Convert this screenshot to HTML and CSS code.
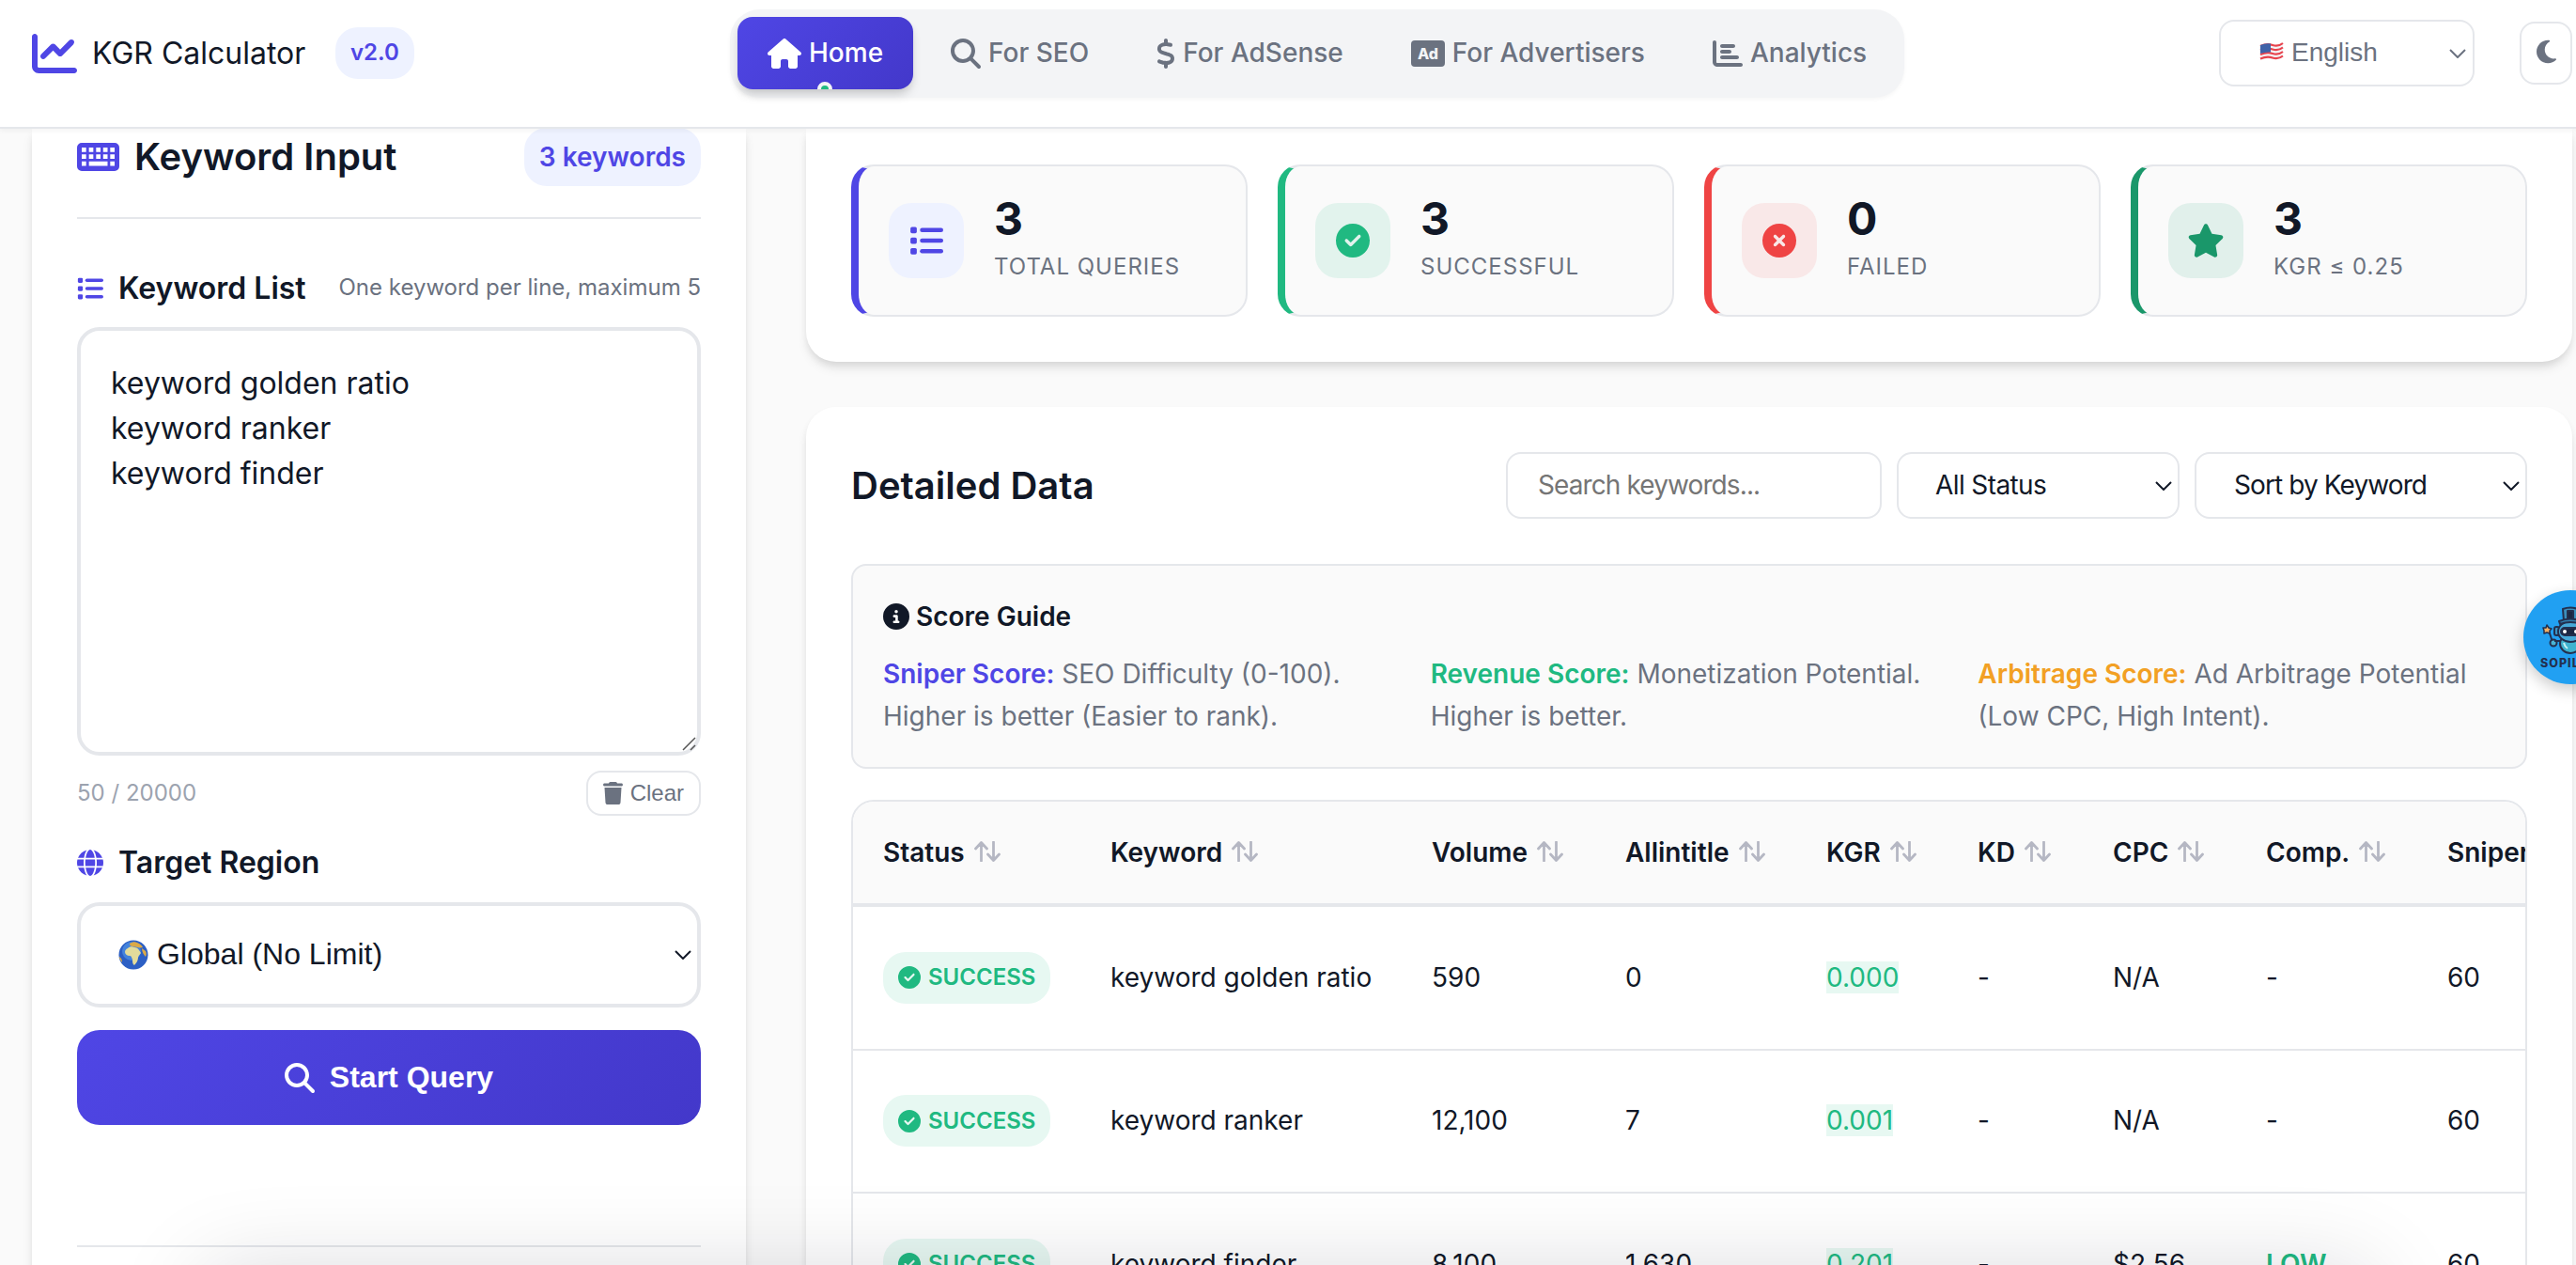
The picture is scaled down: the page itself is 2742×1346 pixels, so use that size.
FILE: index.html
```html
<!DOCTYPE html>
<html lang="en">
<head>
    <meta charset="UTF-8">
    <title>KGR Calculator</title>
    <link rel="stylesheet" href="styles.css">
</head>
<body>
    <!-- Shared icons -->
    <svg class="sprite">
        <symbol id="i-search" viewBox="0 0 512 512"><path d="M416 208c0 45.9-14.9 88.3-40 122.7L502.6 457.4c12.5 12.5 12.5 32.8 0 45.3s-32.8 12.5-45.3 0L330.7 376c-34.4 25.2-76.8 40-122.7 40C93.1 416 0 322.9 0 208S93.1 0 208 0S416 93.1 416 208zM208 352a144 144 0 1 0 0-288 144 144 0 1 0 0 288z"/></symbol>
        <symbol id="i-list" viewBox="0 0 512 512">
            <rect x="16" y="48" width="96" height="96" rx="24"/><rect x="160" y="64" width="352" height="64" rx="32"/>
            <rect x="16" y="208" width="96" height="96" rx="24"/><rect x="160" y="224" width="352" height="64" rx="32"/>
            <rect x="16" y="368" width="96" height="96" rx="24"/><rect x="160" y="384" width="352" height="64" rx="32"/>
        </symbol>
        <symbol id="i-check" viewBox="0 0 512 512"><path d="M256 512A256 256 0 1 0 256 0a256 256 0 1 0 0 512zM369 209L241 337c-9.4 9.4-24.6 9.4-33.9 0l-64-64c-9.4-9.4-9.4-24.6 0-33.9s24.6-9.4 33.9 0l47 47L335 175c9.4-9.4 24.6-9.4 33.9 0s9.4 24.6 0 33.9z"/></symbol>
        <symbol id="i-chevron" viewBox="0 0 18 10"><path d="M1 1l8 8 8-8" fill="none" stroke="currentColor" stroke-width="2"/></symbol>
        <symbol id="i-sort" viewBox="0 0 28 22"><path d="M7.5 21V2M1.5 8l6-6.5 6 6.5M20.5 1v19M14.5 14l6 6.5 6-6.5" fill="none" stroke="currentColor" stroke-width="2.8" stroke-linecap="round" stroke-linejoin="round"/></symbol>
    </svg>

    <header class="header">
        <div class="logo">
            <svg class="logo-icon" viewBox="0 0 512 512"><path d="M64 64c0-17.7-14.3-32-32-32S0 46.3 0 64V400c0 44.2 35.8 80 80 80H480c17.7 0 32-14.3 32-32s-14.3-32-32-32H80c-8.8 0-16-7.2-16-16V64zm406.6 86.6c12.5-12.5 12.5-32.8 0-45.3s-32.8-12.5-45.3 0L320 210.7l-57.4-57.4c-12.5-12.5-32.8-12.5-45.3 0l-112 112c-12.5 12.5-12.5 32.8 0 45.3s32.8 12.5 45.3 0L240 221.3l57.4 57.4c12.5 12.5 32.8 12.5 45.3 0l128-128z"/></svg>
            <span class="logo-text">KGR Calculator</span>
            <span class="version">v2.0</span>
        </div>
        <nav class="nav">
            <a class="nav-item active">
                <svg class="wide" viewBox="0 0 576 512"><path d="M575.8 255.5c0 18-15 32.1-32 32.1h-32l.7 160.2c0 2.7-.2 5.4-.5 8.1V472c0 22.1-17.9 40-40 40H456c-1.1 0-2.2 0-3.3-.1c-1.4 .1-2.8 .1-4.2 .1H416 392c-22.1 0-40-17.9-40-40V448 384c0-17.7-14.3-32-32-32H256c-17.7 0-32 14.3-32 32v64 24c0 22.1-17.9 40-40 40H160 128.1c-1.5 0-3-.1-4.5-.2c-1.2 .1-2.4 .2-3.6 .2H104c-22.1 0-40-17.9-40-40V360c0-.9 0-1.9 .1-2.8V287.6H32c-18 0-32-14-32-32.1c0-9 3-17 10-24L266.4 8c7-7 15-8 22-8s15 2 21 7L564.8 231.5c8 7 12 15 11 24z"/></svg>
                Home
            </a>
            <a class="nav-item"><svg><use href="#i-search"/></svg>For SEO</a>
            <a class="nav-item">
                <svg class="thin" viewBox="0 0 320 512"><path d="M160 0c17.7 0 32 14.3 32 32V67.7c1.6 .2 3.1 .4 4.7 .7c.4 .1 .7 .1 1.1 .2l48 8.8c17.4 3.2 28.9 19.9 25.7 37.2s-19.9 28.9-37.2 25.7l-47.5-8.7c-31.3-4.6-58.9-1.5-78.3 6.2s-27.2 18.3-29 28.1c-2 10.7-.5 16.7 1.2 20.4c1.8 3.9 5.5 8.3 12.8 13.2c16.3 10.7 41.3 17.7 73.7 26.3l2.9 .8c28.6 7.6 63.6 16.8 89.6 33.8c14.2 9.3 27.6 21.9 35.9 39.5c8.5 17.9 10.3 37.9 6.4 59.2c-6.9 38-33.1 63.4-65.6 76.7c-13.7 5.6-28.6 9.2-44.4 11V480c0 17.7-14.3 32-32 32s-32-14.3-32-32V445.1c-.4-.1-.9-.1-1.3-.2l-.2 0c-24.4-3.8-64.5-14.3-91.5-26.3c-16.1-7.2-23.4-26.1-16.2-42.2s26.1-23.4 42.2-16.2c20.9 9.3 55.3 18.5 75.2 21.6c31.9 4.7 58.2 2 76-5.3c16.9-6.9 24.6-16.9 26.8-28.9c1.9-10.6 .4-16.7-1.3-20.4c-1.9-4-5.6-8.4-13-13.3c-16.4-10.7-41.5-17.7-74-26.3l-2.8-.7C119.4 279.3 84.4 270 58.4 253c-14.2-9.3-27.5-22-35.8-39.6c-8.4-17.9-10.1-37.9-6.1-59.2C23.7 116 52.3 91.2 84.8 78.3c13.3-5.3 27.9-8.9 43.2-11V32c0-17.7 14.3-32 32-32z"/></svg>
                For AdSense
            </a>
            <a class="nav-item">
                <svg class="wide" viewBox="0 0 576 512"><rect y="32" width="576" height="448" rx="64"/><text class="ad-text" x="288" y="346" text-anchor="middle">Ad</text></svg>
                For Advertisers
            </a>
            <a class="nav-item">
                <svg viewBox="0 0 512 512"><path d="M32 32c17.7 0 32 14.3 32 32V400c0 8.8 7.2 16 16 16H480c17.7 0 32 14.3 32 32s-14.3 32-32 32H80c-44.2 0-80-35.8-80-80V64C0 46.3 14.3 32 32 32zm96 96c0-17.7 14.3-32 32-32l192 0c17.7 0 32 14.3 32 32s-14.3 32-32 32l-192 0c-17.7 0-32-14.3-32-32zm32 64H288c17.7 0 32 14.3 32 32s-14.3 32-32 32H160c-17.7 0-32-14.3-32-32s14.3-32 32-32zm0 96H416c17.7 0 32 14.3 32 32s-14.3 32-32 32H160c-17.7 0-32-14.3-32-32s14.3-32 32-32z"/></svg>
                Analytics
            </a>
        </nav>
        <div class="header-right">
            <div class="lang">
                <svg class="flag" viewBox="0 0 26 20">
                    <path d="M1 3q7-3 13-1t11-2v16q-5 3-11 2T1 19z" fill="#f4f4f6"/>
                    <path d="M1 4q7-3 13-1t11-2M1 8.5q7-3 13-1t11-2M1 13q7-3 13-1t11-2M1 17.5q7-3 13-1t11-2" fill="none" stroke="#e8424c" stroke-width="2.2"/>
                    <path d="M1 3q6-2.5 11-1.5v9Q7 10 1 12z" fill="#3f62a8"/>
                </svg>
                <span>English</span>
                <svg class="chevron"><use href="#i-chevron"/></svg>
            </div>
            <div class="theme">
                <svg viewBox="0 0 384 512"><path d="M223.5 32C100 32 0 132.3 0 256S100 480 223.5 480c60.6 0 115.5-24.2 155.8-63.4c5-4.9 6.3-12.5 3.1-18.7s-10.1-9.7-17-8.5c-9.8 1.7-19.8 2.6-30.1 2.6c-96.9 0-175.5-78.8-175.5-176c0-65.8 36-123.1 89.3-153.3c6.1-3.5 9.2-10.5 7.7-17.3s-7.3-11.9-14.3-12.5c-6.3-.5-12.6-.8-19-.8z"/></svg>
            </div>
        </div>
    </header>

    <main class="layout">
        <!-- Left side: keyword form -->
        <section class="panel input-panel">
            <div class="panel-head">
                <svg class="keyboard" viewBox="0 0 576 512"><path fill-rule="evenodd" d="M64 64h448a64 64 0 0 1 64 64v256a64 64 0 0 1-64 64H64a64 64 0 0 1-64-64V128a64 64 0 0 1 64-64zM64 128v60h60v-60zM162 128v60h60v-60zM260 128v60h60v-60zM356 128v60h60v-60zM452 128v60h60v-60zM64 222v60h60v-60zM162 222v60h60v-60zM260 222v60h60v-60zM356 222v60h60v-60zM452 222v60h60v-60zM64 318v60h60v-60zM162 318v60h254v-60zM452 318v60h60v-60z"/></svg>
                <h2>Keyword Input</h2>
                <span class="count">3 keywords</span>
            </div>
            <div class="label-row">
                <svg><use href="#i-list"/></svg>
                <label>Keyword List</label>
                <span class="hint">One keyword per line, maximum 5</span>
            </div>
            <div class="textarea">
                keyword golden ratio<br>keyword ranker<br>keyword finder
                <svg class="grip" viewBox="0 0 15 15"><path d="M1 14L14 1M9 14l5-5" stroke="#555" stroke-width="1.5"/></svg>
            </div>
            <div class="textarea-foot">
                <span>50 / 20000</span>
                <button class="clear">
                    <svg viewBox="0 0 448 512"><path d="M135.2 17.7L128 32H32C14.3 32 0 46.3 0 64S14.3 96 32 96H416c17.7 0 32-14.3 32-32s-14.3-32-32-32H320l-7.2-14.3C307.4 6.8 296.3 0 284.2 0H163.8c-12.1 0-23.2 6.8-28.6 17.7zM416 128H32L53.2 467c1.6 25.3 22.6 45 47.9 45H346.9c25.3 0 46.3-19.7 47.9-45L416 128z"/></svg>
                    Clear
                </button>
            </div>
            <div class="label-row region">
                <svg viewBox="0 0 512 512"><path d="M352 256c0 22.2-1.2 43.6-3.3 64H163.3c-2.2-20.4-3.3-41.8-3.3-64s1.2-43.6 3.3-64H348.7c2.2 20.4 3.3 41.8 3.3 64zm28.8-64H503.9c5.3 20.5 8.1 41.9 8.1 64s-2.8 43.5-8.1 64H380.8c2.1-20.6 3.2-42 3.2-64s-1.1-43.4-3.2-64zm112.6-32H376.7c-10-63.9-29.8-117.4-55.3-151.6c78.3 20.7 142 77.5 171.9 151.6zm-149.1 0H167.7c6.1-36.4 15.5-68.6 27-94.7c10.5-23.6 22.2-40.7 33.5-51.5C239.4 3.2 248.7 0 256 0s16.6 3.2 27.8 13.8c11.3 10.8 23 27.9 33.5 51.5c11.6 26 20.9 58.2 27 94.7zm-209 0H18.6C48.6 85.9 112.2 29.1 190.6 8.4C165.1 42.6 145.3 96.1 135.3 160zM8.1 192H131.2c-2.1 20.6-3.2 42-3.2 64s1.1 43.4 3.2 64H8.1C2.8 299.5 0 278.1 0 256s2.8-43.5 8.1-64zM194.7 446.6c-11.6-26-20.9-58.2-27-94.6H344.3c-6.1 36.4-15.5 68.6-27 94.6c-10.5 23.6-22.2 40.7-33.5 51.5C272.6 508.8 263.3 512 256 512s-16.6-3.2-27.8-13.8c-11.3-10.8-23-27.9-33.5-51.5zM135.3 352c10 63.9 29.8 117.4 55.3 151.6C112.2 482.9 48.6 426.1 18.6 352H135.3zm358.1 0c-30 74.1-93.6 130.9-171.9 151.6c25.5-34.2 45.2-87.7 55.3-151.6H493.4z"/></svg>
                <label>Target Region</label>
            </div>
            <div class="region-select">
                <svg class="earth" viewBox="0 0 32 32">
                    <circle cx="16" cy="16" r="15.5" fill="#2c5fc4"/>
                    <circle cx="14" cy="12" r="10" fill="#4e93e6" opacity=".7"/>
                    <path d="M10 9c2-2 5-2 7-1 2 0 4 1 5 3l2 3c-1 2-3 3-3 5 0 3-2 6-4 8-2-1-2-4-2-6-1-2-1-4-3-4-3 0-5-2-5-4s1-3 3-4z" fill="#e3dc9b"/>
                    <path d="M12 4c3-2 6-2 8-1 3 1 5 3 6 5-2 1-4 0-6 0-2-1-3 0-5-1-2 0-3-1-3-3zM25 9l4 3c1 2 1 4 0 6-2-2-4-5-4-9zM1 18c2 1 3 3 3 6-2-2-3-4-3-6z" fill="#dba947"/>
                </svg>
                <span>Global (No Limit)</span>
                <svg class="chevron"><use href="#i-chevron"/></svg>
            </div>
            <button class="start"><svg><use href="#i-search"/></svg>Start Query</button>
            <div class="form-line"></div>
        </section>

        <div class="results">
            <section class="panel stats">
                <div class="stat total">
                    <div class="stat-icon"><svg><use href="#i-list"/></svg></div>
                    <div><div class="num">3</div><div class="stat-label">Total Queries</div></div>
                </div>
                <div class="stat ok">
                    <div class="stat-icon"><svg><use href="#i-check"/></svg></div>
                    <div><div class="num">3</div><div class="stat-label">Successful</div></div>
                </div>
                <div class="stat fail">
                    <div class="stat-icon"><svg viewBox="0 0 512 512"><path d="M256 512A256 256 0 1 0 256 0a256 256 0 1 0 0 512zM175 175c9.4-9.4 24.6-9.4 33.9 0l47 47 47-47c9.4-9.4 24.6-9.4 33.9 0s9.4 24.6 0 33.9l-47 47 47 47c9.4 9.4 9.4 24.6 0 33.9s-24.6 9.4-33.9 0l-47-47-47 47c-9.4 9.4-24.6 9.4-33.9 0s-9.4-24.6 0-33.9l47-47-47-47c-9.4-9.4-9.4-24.6 0-33.9z"/></svg></div>
                    <div><div class="num">0</div><div class="stat-label">Failed</div></div>
                </div>
                <div class="stat kgr">
                    <div class="stat-icon"><svg class="star" viewBox="0 0 576 512"><path d="M316.9 18C311.6 7 300.4 0 288.1 0s-23.4 7-28.8 18L195 150.3 51.4 171.5c-12 1.8-22 10.2-25.7 21.7s-.7 24.2 7.9 32.7L137.8 329 113.2 474.7c-2 12 3 24.2 12.9 31.3s23 8 33.8 2.3l128.3-68.5 128.3 68.5c10.8 5.7 23.9 4.9 33.8-2.3s14.9-19.3 12.9-31.3L438.5 329 542.7 225.9c8.6-8.5 11.7-21.2 7.9-32.7s-13.7-19.9-25.7-21.7L381.2 150.3 316.9 18z"/></svg></div>
                    <div><div class="num">3</div><div class="stat-label">KGR ≤ 0.25</div></div>
                </div>
            </section>

            <section class="panel data">
                <div class="data-head">
                    <h2>Detailed Data</h2>
                    <div class="field search">Search keywords...</div>
                    <div class="field status">All Status<svg class="chevron"><use href="#i-chevron"/></svg></div>
                    <div class="field sort">Sort by Keyword<svg class="chevron"><use href="#i-chevron"/></svg></div>
                </div>
                <div class="guide">
                    <h4>
                        <svg viewBox="0 0 512 512"><path d="M256 512A256 256 0 1 0 256 0a256 256 0 1 0 0 512zM216 336h24V272H216c-13.3 0-24-10.7-24-24s10.7-24 24-24h48c13.3 0 24 10.7 24 24v88h8c13.3 0 24 10.7 24 24s-10.7 24-24 24H216c-13.3 0-24-10.7-24-24s10.7-24 24-24zm40-208a32 32 0 1 1 0 64 32 32 0 1 1 0-64z"/></svg>
                        Score Guide
                    </h4>
                    <div class="guide-grid">
                        <div><strong class="c-sniper">Sniper Score:</strong> SEO Difficulty (0-100). Higher is better (Easier to rank).</div>
                        <div><strong class="c-revenue">Revenue Score:</strong> Monetization Potential. Higher is better.</div>
                        <div><strong class="c-arbitrage">Arbitrage Score:</strong> Ad Arbitrage Potential (Low CPC, High Intent).</div>
                    </div>
                </div>
                <div class="table-wrap">
                    <table>
                        <colgroup>
                            <col class="w-status"><col class="w-keyword"><col class="w-volume"><col class="w-allin"><col class="w-kgr"><col class="w-kd"><col class="w-cpc"><col class="w-comp"><col class="w-sniper">
                        </colgroup>
                        <thead>
                            <tr>
                                <th>Status<svg><use href="#i-sort"/></svg></th>
                                <th>Keyword<svg><use href="#i-sort"/></svg></th>
                                <th>Volume<svg><use href="#i-sort"/></svg></th>
                                <th>Allintitle<svg><use href="#i-sort"/></svg></th>
                                <th>KGR<svg><use href="#i-sort"/></svg></th>
                                <th>KD<svg><use href="#i-sort"/></svg></th>
                                <th>CPC<svg><use href="#i-sort"/></svg></th>
                                <th>Comp.<svg><use href="#i-sort"/></svg></th>
                                <th>Sniper</th>
                            </tr>
                        </thead>
                        <tbody>
                            <tr>
                                <td><span class="pill"><svg><use href="#i-check"/></svg>SUCCESS</span></td>
                                <td>keyword golden ratio</td>
                                <td>590</td>
                                <td>0</td>
                                <td><span class="good">0.000</span></td>
                                <td>-</td>
                                <td>N/A</td>
                                <td>-</td>
                                <td>60</td>
                            </tr>
                            <tr>
                                <td><span class="pill"><svg><use href="#i-check"/></svg>SUCCESS</span></td>
                                <td>keyword ranker</td>
                                <td>12,100</td>
                                <td>7</td>
                                <td><span class="good">0.001</span></td>
                                <td>-</td>
                                <td>N/A</td>
                                <td>-</td>
                                <td>60</td>
                            </tr>
                            <tr>
                                <td><span class="pill"><svg><use href="#i-check"/></svg>SUCCESS</span></td>
                                <td>keyword finder</td>
                                <td>8,100</td>
                                <td>1,630</td>
                                <td><span class="good">0.201</span></td>
                                <td>-</td>
                                <td>$2.56</td>
                                <td><span class="low">LOW</span></td>
                                <td>60</td>
                            </tr>
                        </tbody>
                    </table>
                </div>
            </section>
        </div>
    </main>

    <!-- Floating assistant button, cut by the window edge -->
    <div class="bot">
        <svg viewBox="0 0 100 100">
            <g stroke="#23304f" stroke-width="2" stroke-linejoin="round">
                <path d="M27 43l5 15" fill="none"/>
                <path d="M25 37l2 3 3 1-2 2 0 3-3-1-3 1 0-3-1-3 3 0z" fill="#f3b065" stroke-width="1.5"/>
                <circle cx="32" cy="56" r="3.5" fill="#49b4d6"/>
                <path d="M33 54h8M63 54h8" fill="none"/>
                <ellipse cx="50" cy="57" rx="11" ry="10" fill="#3fb3cf"/>
                <rect x="33" y="39" width="5" height="9" rx="2" fill="#3a93c4"/>
                <rect x="62" y="39" width="5" height="9" rx="2" fill="#3a93c4"/>
                <ellipse cx="50" cy="44" rx="13" ry="11" fill="#47a9d8"/>
                <rect x="40" y="40" width="20" height="8" rx="4" fill="#1c2742"/>
                <path d="M42 20q8-3 16 0l-1 13H43z" fill="#3c8fbd"/>
                <path d="M47 22h6v9h-6z" fill="#1c2742"/>
                <path d="M38 33q12-5 24 0l-1 3q-11-4-22 0z" fill="#327fae"/>
            </g>
            <circle cx="44" cy="44" r="2" fill="#fff"/>
            <circle cx="56" cy="44" r="2" fill="#fff"/>
            <path d="M43 56q1 4 4 6" fill="none" stroke="#c5f1f4" stroke-width="2"/>
        </svg>
        <span>SOPILOT</span>
    </div>
    <div class="bottom-shade"></div>
</body>
</html>
```

FILE: styles.css
```css
*, *::after {
    box-sizing: border-box;
}

body {
    margin: 0;
    height: 1346px;
    overflow: hidden;
    position: relative;
    background: #fafafa;
    color: #111827;
    font-family: Inter, sans-serif;
    font-size: 28px;
    line-height: 1.6;
}

h2, h4 {
    margin: 0;
}

svg {
    fill: currentColor;
    flex: none;
    width: 28px;
    height: 28px;
}

.sprite {
    display: none;
}

/* Header */
.header {
    position: relative;
    z-index: 5;
    height: 137px;
    padding: 10px 4px 0 34px;
    display: grid;
    grid-template-columns: 743px auto 1fr;
    align-items: start;
    background: #fff;
    border-bottom: 2px solid #e5e7eb;
    box-shadow: 0 2px 6px rgba(0, 0, 0, .05);
}

.logo {
    height: 93px;
    display: flex;
    align-items: center;
}

.logo-icon {
    width: 48px;
    height: 48px;
    color: #4f46e5;
}

.logo-text {
    margin: 0 32px 0 16px;
    width: 227px;
    font-size: 32px;
    white-space: nowrap;
}

.version {
    padding: 0 16px;
    height: 55px;
    line-height: 53px;
    border-radius: 24px;
    background: #eef2ff;
    color: #4f46e5;
    font-size: 24px;
    font-weight: 600;
}

.nav {
    display: flex;
    gap: 8px;
    padding: 8px;
    height: 94px;
    border-radius: 32px;
    background: #f3f4f6;
    box-shadow: 0 2px 4px rgba(0, 0, 0, .04);
}

.nav-item {
    position: relative;
    display: flex;
    align-items: center;
    gap: 8px;
    padding: 0 32px;
    height: 77px;
    border-radius: 16px;
    color: #6b7280;
    font-weight: 500;
    white-space: nowrap;
}

    .nav-item svg {
        width: 32px;
        height: 32px;
    }

    .nav-item .wide {
        width: 36px;
    }

    .nav-item .thin {
        width: 20px;
    }

    .nav-item.active {
        overflow: hidden;
        color: #fff;
        background: linear-gradient(135deg, #4f46e5, #4338ca);
        box-shadow: 0 8px 12px -2px rgba(0, 0, 0, .12), 0 4px 8px -2px rgba(0, 0, 0, .1);
    }

    /* current page dot, only its upper half is visible */
    .nav-item.active::after {
        content: "";
        position: absolute;
        left: 85px;
        top: 69px;
        width: 16px;
        height: 16px;
        border: 4px solid #f3f4f6;
        border-radius: 50%;
        background: #20b981;
    }

.ad-text {
    fill: #f3f4f6;
    font-size: 256px;
    font-weight: 800;
}

.header-right {
    height: 93px;
    display: flex;
    align-items: center;
    justify-content: flex-end;
    gap: 48px;
    color: #6b7280;
}

.lang {
    width: 272px;
    height: 71px;
    padding: 0 7px 0 41px;
    display: flex;
    align-items: center;
    border: 2px solid #e5e7eb;
    border-radius: 16px;
    font-family: "Liberation Sans", Arial, sans-serif;
    font-size: 28px;
}

.flag {
    width: 26px;
    height: 20px;
    margin-right: 8px;
    margin-top: -3px;
}

.chevron {
    width: 18px;
    height: 10px;
    margin-left: auto;
}

.theme {
    width: 56px;
    height: 67px;
    display: flex;
    align-items: center;
    justify-content: center;
    border: 2px solid #e5e7eb;
    border-radius: 16px;
}

    .theme svg {
        width: 21px;
        height: 28px;
        margin-top: -3px;
    }

/* Page columns */
.layout {
    display: grid;
    grid-template-columns: 760px 1880px;
    gap: 64px;
    padding-left: 34px;
    height: 1209px;
}

.panel {
    background: #fff;
    box-shadow: 0 8px 12px -2px rgba(0, 0, 0, .1), 0 4px 8px -2px rgba(0, 0, 0, .08);
}

.input-panel {
    padding: 0 48px;
}

.panel-head {
    display: flex;
    align-items: center;
    height: 96px;
    padding-bottom: 34px;
    border-bottom: 2px solid #e5e7eb;
}

    .panel-head h2 {
        margin-left: 16px;
        font-size: 40px;
        font-weight: 600;
    }

.keyboard {
    width: 45px;
    height: 40px;
    color: #4f46e5;
}

.count {
    margin-left: auto;
    padding: 0 16px;
    height: 62px;
    line-height: 62px;
    border-radius: 24px;
    background: #eef2ff;
    color: #4f46e5;
    font-weight: 600;
}

.label-row {
    display: flex;
    align-items: center;
    margin-top: 48px;
    height: 51px;
}

    .label-row svg {
        color: #4f46e5;
    }

    .label-row label {
        margin-left: 16px;
        font-size: 32px;
        font-weight: 600;
    }

.hint {
    margin-left: auto;
    color: #6b7280;
    font-size: 24px;
}

.textarea {
    position: relative;
    margin-top: 16px;
    height: 456px;
    padding: 32px;
    border: 4px solid #e5e7eb;
    border-radius: 24px;
    font-size: 32px;
    line-height: 48px;
}

.grip {
    position: absolute;
    right: 1px;
    bottom: 1px;
    width: 15px;
    height: 15px;
}

.textarea-foot {
    margin-top: 16px;
    display: flex;
    align-items: center;
    justify-content: space-between;
    height: 48px;
    color: #9ca3af;
    font-size: 24px;
}

.clear {
    display: flex;
    align-items: center;
    gap: 8px;
    height: 48px;
    padding: 0 16px;
    border: 2px solid #e5e7eb;
    border-radius: 16px;
    background: #fff;
    color: #6b7280;
    font-family: "Liberation Sans", Arial, sans-serif;
    font-size: 24px;
}

    .clear svg {
        width: 21px;
        height: 24px;
    }

.label-row.region {
    margin-top: 24px;
}

.region-select {
    margin-top: 17px;
    height: 112px;
    padding: 0 6px 0 40px;
    display: flex;
    align-items: center;
    border: 4px solid #e5e7eb;
    border-radius: 24px;
    font-family: "Liberation Sans", Arial, sans-serif;
    font-size: 32px;
}

.earth {
    width: 32px;
    height: 32px;
    margin-right: 9px;
}

.start {
    margin-top: 24px;
    width: 100%;
    height: 101px;
    display: flex;
    align-items: center;
    justify-content: center;
    gap: 16px;
    border: 0;
    border-radius: 24px;
    background: linear-gradient(135deg, #4f46e5, #4338ca);
    color: #fff;
    font-family: "Liberation Sans", Arial, sans-serif;
    font-size: 32px;
    font-weight: 700;
}

    .start svg {
        width: 32px;
        height: 32px;
    }

.form-line {
    margin-top: 128px;
    height: 2px;
    background: #e5e7eb;
}

/* Stats */
.stats {
    height: 248px;
    padding: 38px 48px 48px;
    display: grid;
    grid-template-columns: repeat(4, 1fr);
    gap: 32px;
    border-radius: 0 0 32px 32px;
}

.stat {
    display: flex;
    align-items: center;
    gap: 32px;
    height: 162px;
    padding-left: 32px;
    border: 2px solid #e5e7eb;
    border-left: 8px solid;
    border-radius: 24px;
    background: #fafafa;
}

.stat-icon {
    width: 80px;
    height: 80px;
    display: flex;
    align-items: center;
    justify-content: center;
    border-radius: 24px;
}

    .stat-icon svg {
        width: 36px;
        height: 36px;
    }

    .stat-icon .star {
        width: 40px;
    }

.total {
    border-left-color: #4f46e5;
}

.total .stat-icon {
    background: #eef2ff;
    color: #4f46e5;
}

.ok {
    border-left-color: #20b981;
}

.ok .stat-icon {
    background: #e2f3ed;
    color: #20b981;
}

.fail {
    border-left-color: #ef4444;
}

.fail .stat-icon {
    background: #f9e8e8;
    color: #ef4444;
}

.kgr {
    border-left-color: #1a976a;
}

.kgr .stat-icon {
    background: #e1f0eb;
    color: #1a976a;
}

.num {
    font-size: 48px;
    font-weight: 700;
    line-height: 48px;
    margin-bottom: 8px;
}

.stat-label {
    color: #6b7280;
    font-size: 24px;
    line-height: 38px;
    letter-spacing: 1px;
    text-transform: uppercase;
}

/* Detailed data */
.data {
    margin-top: 48px;
    height: 1000px;
    padding: 48px;
    border-radius: 32px;
}

.data-head {
    display: flex;
    align-items: center;
    gap: 16px;
    height: 71px;
}

    .data-head h2 {
        margin-right: auto;
        font-size: 40px;
        font-weight: 600;
    }

.field {
    display: flex;
    align-items: center;
    height: 71px;
    border: 2px solid #e5e7eb;
    border-radius: 16px;
    letter-spacing: -.9px;
    white-space: nowrap;
}

.search {
    width: 400px;
    padding-left: 32px;
    color: #757575;
}

.status {
    width: 301px;
    padding: 0 6px 0 39px;
    letter-spacing: -.6px;
}

.sort {
    width: 354px;
    padding: 0 6px 0 40px;
}

.guide {
    margin-top: 48px;
    height: 218px;
    padding: 32px;
    border: 2px solid #e5e7eb;
    border-radius: 16px;
    background: #fafafa;
}

    .guide h4 {
        display: flex;
        align-items: center;
        gap: 7px;
        margin-bottom: 16px;
        font-weight: 600;
    }

.guide-grid {
    display: grid;
    grid-template-columns: repeat(3, 1fr);
    gap: 32px;
    color: #6b7280;
}

.guide-grid strong {
    font-weight: 600;
}

.c-sniper {
    color: #4f46e5;
}

.c-revenue {
    color: #20b981;
}

.c-arbitrage {
    color: #f2a024;
}

.table-wrap {
    margin-top: 33px;
    height: 700px;
    overflow: hidden;
    border: 2px solid #e5e7eb;
    border-radius: 24px;
}

table {
    width: 1865px;
    table-layout: fixed;
    border-collapse: separate;
    border-spacing: 0;
}

.w-status { width: 242px; }
.w-keyword { width: 342px; }
.w-volume { width: 206px; }
.w-allin { width: 214px; }
.w-kgr { width: 161px; }
.w-kd { width: 144px; }
.w-cpc { width: 163px; }
.w-comp { width: 193px; }
.w-sniper { width: 200px; }

th {
    height: 112px;
    padding: 0 0 0 32px;
    background: #fafafa;
    border-bottom: 4px solid #e5e7eb;
    text-align: left;
    font-weight: 600;
    white-space: nowrap;
}

    th svg {
        height: 22px;
        margin-left: 10px;
        color: #b5b7c3;
    }

td {
    height: 152.5px;
    padding: 0 0 0 32px;
    border-bottom: 2px solid #e5e7eb;
    white-space: nowrap;
}

.pill {
    display: flex;
    align-items: center;
    gap: 8px;
    width: 178px;
    height: 55px;
    padding-left: 16px;
    border-radius: 24px;
    background: #e7f8f2;
    color: #20b981;
    font-size: 24px;
    font-weight: 600;
}

    .pill svg {
        width: 24px;
        height: 24px;
    }

.good {
    background: #e7f8f2;
    color: #20b981;
}

.low {
    color: #20b981;
    font-weight: 600;
}

/* Floating items */
.bot {
    position: absolute;
    z-index: 6;
    left: 2686px;
    top: 628px;
    width: 100px;
    height: 100px;
    border-radius: 50%;
    background: #21a0f2;
    box-shadow: 0 6px 16px rgba(0, 0, 0, .2);
}

    .bot svg {
        width: 100px;
        height: 100px;
    }

    .bot span {
        position: absolute;
        left: 18px;
        top: 70px;
        color: #23304f;
        font-size: 12.5px;
        font-weight: 800;
        line-height: 16px;
        letter-spacing: 1px;
    }

.bottom-shade {
    position: absolute;
    z-index: 7;
    left: 220px;
    right: 220px;
    top: 1356px;
    height: 100px;
    box-shadow: 0 0 100px rgba(10, 15, 30, .16);
}
```
